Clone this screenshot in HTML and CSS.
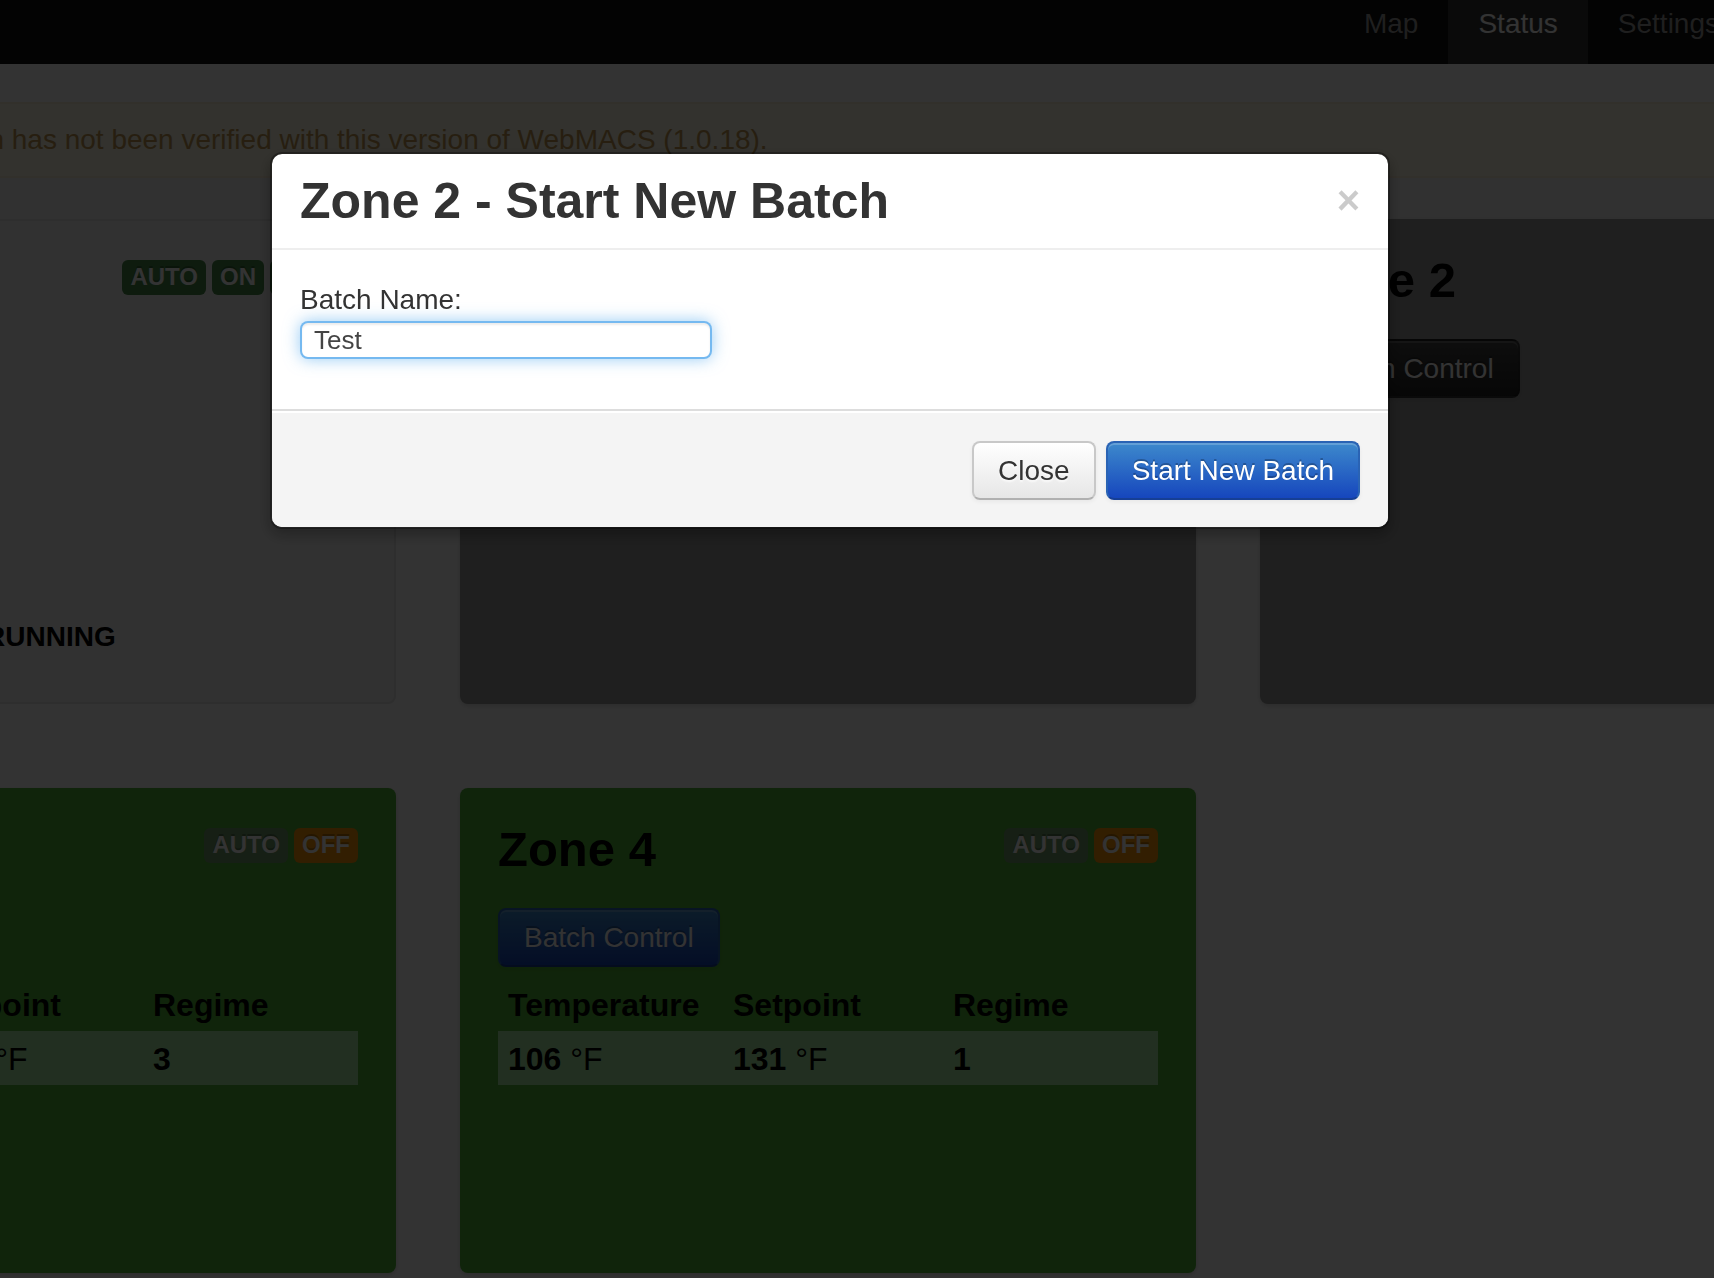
FILE: index.html
```html
<!DOCTYPE html>
<html lang="en">
<head>
<meta charset="utf-8">
<title>WebMACS - Status</title>
<link rel="stylesheet" href="styles.css">
</head>
<body>
<div class="page">
  <div class="navbar">
    <ul class="nav">
      <li class="nav-item"><a class="nav-link" href="#">Map</a></li>
      <li class="nav-item active"><a class="nav-link" href="#">Status</a></li>
      <li class="nav-item"><a class="nav-link" href="#">Settings</a></li>
    </ul>
  </div>

  <div class="alert"><span class="alert-lead">This configuration</span> has not been verified with this version of WebMACS (1.0.18).</div>
  <div class="subbar"></div>

  <div class="zones">
    <div class="zone zone-well">
      <div class="zone-head">
        <h3 class="zone-title">Boiler</h3>
        <div class="labels">
          <span class="label label-success">AUTO</span>
          <span class="label label-success">ON</span>
          <span class="label label-success label-wide">HEAT</span>
        </div>
      </div>
      <p class="zone-state"><span class="state-lead">Batch State:</span><strong>RUNNING</strong></p>
    </div>

    <div class="zone zone-idle">
      <div class="zone-head">
        <h3 class="zone-title">Zone 1</h3>
        <div class="labels">
          <span class="label label-muted">AUTO</span>
          <span class="label label-warning">OFF</span>
        </div>
      </div>
      <div class="zone-actions"><button class="btn btn-inverse">Batch Control</button></div>
    </div>

    <div class="zone zone-idle">
      <div class="zone-head">
        <h3 class="zone-title">Zone 2</h3>
        <div class="labels">
          <span class="label label-muted">AUTO</span>
          <span class="label label-warning">OFF</span>
        </div>
      </div>
      <div class="zone-actions"><button class="btn btn-inverse">Batch Control</button></div>
    </div>

    <div class="zone zone-active">
      <div class="zone-head">
        <h3 class="zone-title">Zone 3</h3>
        <div class="labels">
          <span class="label label-muted">AUTO</span>
          <span class="label label-warning">OFF</span>
        </div>
      </div>
      <div class="zone-actions"><button class="btn btn-primary">Batch Control</button></div>
      <table class="readings">
        <colgroup><col class="col-temp"><col class="col-set"><col></colgroup>
        <thead><tr><th>Temperature</th><th>Setpoint</th><th>Regime</th></tr></thead>
        <tbody><tr><td><strong>102</strong> °F</td><td><strong>128</strong> °F</td><td><strong>3</strong></td></tr></tbody>
      </table>
    </div>

    <div class="zone zone-active">
      <div class="zone-head">
        <h3 class="zone-title">Zone 4</h3>
        <div class="labels">
          <span class="label label-muted">AUTO</span>
          <span class="label label-warning">OFF</span>
        </div>
      </div>
      <div class="zone-actions"><button class="btn btn-primary">Batch Control</button></div>
      <table class="readings">
        <colgroup><col class="col-temp"><col class="col-set"><col></colgroup>
        <thead><tr><th>Temperature</th><th>Setpoint</th><th>Regime</th></tr></thead>
        <tbody><tr><td><strong>106</strong> °F</td><td><strong>131</strong> °F</td><td><strong>1</strong></td></tr></tbody>
      </table>
    </div>
  </div>
</div>

<div class="backdrop"></div>

<div class="modal">
  <div class="modal-header">
    <h3 class="modal-title">Zone 2 - Start New Batch</h3>
    <button class="close" type="button">×</button>
  </div>
  <div class="modal-body">
    <label class="field-label" for="batch-name">Batch Name:</label>
    <input class="field-input" id="batch-name" type="text" value="Test">
  </div>
  <div class="modal-footer">
    <button class="btn" type="button">Close</button>
    <button class="btn btn-primary" type="button">Start New Batch</button>
  </div>
</div>
</body>
</html>
```

FILE: styles.css
```css
* {
  box-sizing: border-box;
}

html,
body {
  margin: 0;
  padding: 0;
  overflow: hidden;
}

body {
  width: 1714px;
  height: 1278px;
  font-family: "Liberation Sans", Arial, Helvetica, sans-serif;
  font-size: 28px;
  line-height: 40px;
  color: #333;
  background: #fff;
}

/* page is scrolled sideways: the grid starts left of the viewport */
.page {
  width: 2336px;
  margin-left: -340px;
}

/* ---------- navbar ---------- */
.navbar {
  height: 64px;
  background: #0f0f0f;
  display: flex;
  justify-content: flex-end;
  padding-right: 247px;
}

.nav {
  list-style: none;
  margin: 0;
  padding: 0;
  display: flex;
}

.nav-link {
  display: block;
  height: 64px;
  padding: 4px 30px 20px;
  color: #999;
  text-decoration: none;
}

.nav-item.active .nav-link {
  color: #fff;
  background: #363636;
}

/* ---------- alert ---------- */
.alert {
  margin-top: 38px;
  padding: 16px 70px 16px 28px;
  background: #fcf8e3;
  border: 2px solid #fbeed5;
  border-radius: 8px;
  color: #c09853;
  white-space: nowrap;
}

.alert-lead {
  display: inline-block;
  width: 314px;
  text-align: right;
}

.subbar {
  height: 41px;
  background: #f3f3f3;
}

/* ---------- zones ---------- */
.zones {
  display: grid;
  grid-template-columns: repeat(3, 736px);
  column-gap: 64px;
  row-gap: 84px;
}

.zone {
  height: 485px;
  border-radius: 8px;
  padding: 34px 38px;
  color: #000;
}

.zone-well {
  background: #f5f5f5;
  border: 2px solid #e3e3e3;
  padding: 33px 36px;
}

.zone-idle {
  background: #9a9a9a;
  box-shadow: 0 2px 4px rgba(0, 0, 0, 0.15);
}

.zone-active {
  background: #50b437;
  box-shadow: 0 2px 4px rgba(0, 0, 0, 0.15);
}

.zone-head {
  display: flex;
  justify-content: space-between;
  align-items: flex-start;
}

.zone-title {
  margin: 0;
  font-size: 49px;
  line-height: 54px;
  font-weight: bold;
  color: #000;
}

.labels {
  display: flex;
  gap: 6px;
  margin-top: 6px;
}

.label {
  display: block;
  font-size: 24px;
  line-height: 28px;
  padding: 3px 8px 4px;
  border-radius: 6px;
  font-weight: bold;
  color: #fff;
  background: #999;
  text-shadow: 0 -2px 0 rgba(0, 0, 0, 0.25);
}

.label-success {
  background: #468847;
}

.label-warning {
  background: #f89406;
}

.label-muted {
  background: #6f9c68;
}

.label-wide {
  min-width: 88px;
  text-align: center;
}

.zone-actions {
  margin-top: 32px;
}

.zone-state {
  margin: 309px 0 0;
  white-space: nowrap;
}

.state-lead {
  display: inline-block;
  width: 287px;
}

.readings {
  width: 100%;
  table-layout: fixed;
  border-collapse: collapse;
  margin-top: 10px;
  font-size: 32px;
  line-height: 40px;
  color: #000;
}

.col-temp {
  width: 225px;
}

.col-set {
  width: 220px;
}

.readings th,
.readings td {
  padding: 8px 10px 6px;
  text-align: left;
  white-space: nowrap;
}

.readings th {
  font-weight: bold;
}

.readings td {
  font-weight: normal;
}

.readings tbody tr {
  background: #aceca4;
}

/* ---------- buttons ---------- */
.btn {
  display: inline-block;
  margin: 0;
  padding: 8px 24px;
  font-family: inherit;
  font-size: 28px;
  line-height: 39px;
  color: #333;
  text-align: center;
  white-space: nowrap;
  border: 2px solid #c8c8c8;
  border-bottom-color: #b0b0b0;
  border-radius: 8px;
  background: linear-gradient(#ffffff, #e6e6e6);
  box-shadow: inset 0 2px 0 rgba(255, 255, 255, 0.2), 0 2px 4px rgba(0, 0, 0, 0.05);
  text-shadow: 0 2px 2px rgba(255, 255, 255, 0.75);
  cursor: pointer;
}

.btn-primary {
  color: #fff;
  background: linear-gradient(#3d89cc, #1646bd);
  border-color: #2a63b4 #2a63b4 #163f95;
  text-shadow: 0 -2px 0 rgba(0, 0, 0, 0.25);
}

.btn-inverse {
  color: #fff;
  background: linear-gradient(#444, #222);
  border-color: rgba(0, 0, 0, 0.1) rgba(0, 0, 0, 0.1) rgba(0, 0, 0, 0.25);
  text-shadow: 0 -2px 0 rgba(0, 0, 0, 0.25);
}

/* ---------- modal ---------- */
.backdrop {
  position: fixed;
  top: 0;
  left: 0;
  right: 0;
  bottom: 0;
  background: #000;
  opacity: 0.8;
  z-index: 10;
}

.modal {
  position: fixed;
  left: 270px;
  top: 152px;
  width: 1120px;
  z-index: 20;
  background: #fff;
  background-clip: padding-box;
  border: 2px solid rgba(0, 0, 0, 0.3);
  border-radius: 12px;
  box-shadow: 0 6px 14px rgba(0, 0, 0, 0.3);
}

.modal-header {
  display: flex;
  justify-content: space-between;
  align-items: flex-start;
  padding: 20px 28px;
  border-bottom: 2px solid #eee;
}

.modal-title {
  margin: 0;
  font-size: 50px;
  line-height: 54px;
  font-weight: bold;
  color: #333;
}

.close {
  margin-top: 8px;
  padding: 0;
  border: 0;
  background: none;
  font-family: inherit;
  font-size: 40px;
  line-height: 36px;
  font-weight: bold;
  color: #000;
  opacity: 0.2;
  cursor: pointer;
}

.modal-body {
  padding: 30px 28px;
}

.field-label {
  display: block;
  margin-bottom: 1px;
  color: #333;
}

.field-input {
  display: block;
  width: 412px;
  height: 38px;
  margin: 0 0 20px;
  padding: 0 12px;
  font-family: inherit;
  font-size: 26px;
  color: #444;
  background: #fff;
  border: 2px solid rgba(82, 168, 236, 0.8);
  border-radius: 8px;
  outline: none;
  box-shadow: inset 0 2px 2px rgba(0, 0, 0, 0.075), 0 0 16px rgba(82, 168, 236, 0.6);
}

.modal-footer {
  display: flex;
  justify-content: flex-end;
  gap: 10px;
  padding: 30px 28px 27px;
  background: #f4f4f4;
  border-top: 2px solid #ddd;
  border-radius: 0 0 10px 10px;
  box-shadow: inset 0 2px 0 #fff;
}
```
